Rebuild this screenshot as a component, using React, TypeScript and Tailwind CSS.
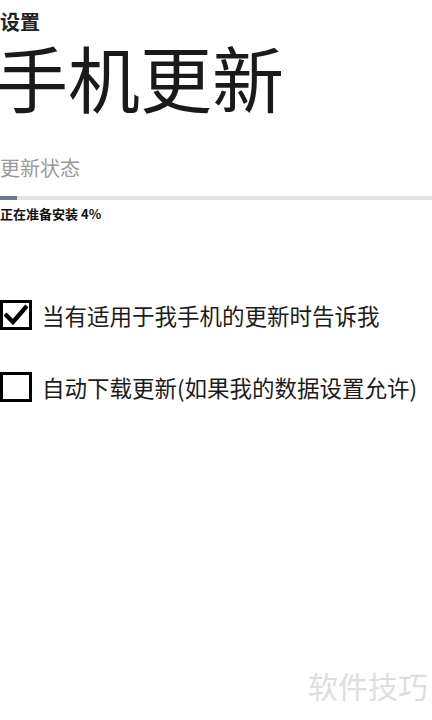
import { useState } from 'react'

const fontStack = '"Noto Sans CJK SC", "Noto Sans", sans-serif'

interface CheckRowProps {
  label: string
  checked: boolean
  onToggle: () => void
}

function CheckRow({ label, checked, onToggle }: CheckRowProps) {
  return (
    <button type="button" onClick={onToggle} className="flex items-center gap-[10px] text-left">
      <span className="flex h-[30px] w-[32px] shrink-0 items-center justify-center border-[3px] border-black bg-white">
        {checked && (
          <svg width="24" height="22" viewBox="0 0 24 22" fill="none">
            <path d="M2.5 11.5 L9 18 L21.5 3.5" stroke="#000" strokeWidth="4.4" strokeLinecap="square" />
          </svg>
        )}
      </span>
      <span className="text-[22.5px] leading-none text-[#1c1c1c]">{label}</span>
    </button>
  )
}

export default function App() {
  const [notify, setNotify] = useState(true)
  const [autoDownload, setAutoDownload] = useState(false)
  const progress = 4

  return (
    <div className="flex h-[720px] w-[432px] flex-col overflow-hidden bg-white" style={{ fontFamily: fontStack }}>
      <div className="mt-[12px] text-[20px] font-bold leading-none text-[#222]">设置</div>
      <h1 className="ml-[-4px] mt-[8px] text-[72px] font-normal leading-none text-[#1a1a1a]">手机更新</h1>

      <div className="mt-[46px] text-[20px] leading-none text-[#9a9a9a]">更新状态</div>
      <div className="mt-[18px] h-[4px] w-full bg-[#e3e3e3]">
        <div className="h-full w-[17px] bg-[#6b7890]" data-progress={progress} />
      </div>
      <div className="mt-[7px] text-[13px] font-bold leading-none text-[#111]">正在准备安装 {progress}%</div>

      <div className="mt-[80px] flex flex-col gap-[42px]">
        <CheckRow label="当有适用于我手机的更新时告诉我" checked={notify} onToggle={() => setNotify(!notify)} />
        <CheckRow
          label="自动下载更新(如果我的数据设置允许)"
          checked={autoDownload}
          onToggle={() => setAutoDownload(!autoDownload)}
        />
      </div>

      <div className="mb-[20px] mr-[4px] mt-auto self-end text-[30px] leading-none text-[#dedede]">软件技巧</div>
    </div>
  )
}
